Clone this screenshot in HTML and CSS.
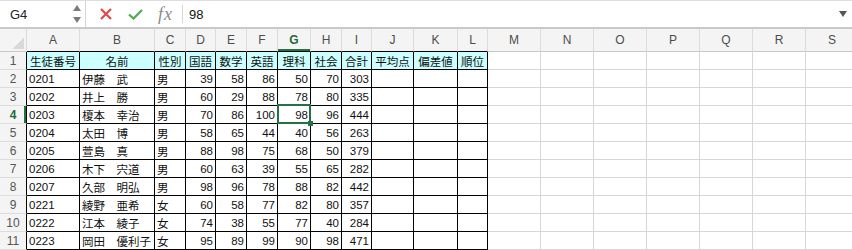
FILE: index.html
```html
<!DOCTYPE html>
<html lang="ja">
<head>
  <meta charset="UTF-8">
  <meta name="viewport" content="width=device-width, initial-scale=1.0">
  <title>成績表</title>
  <link rel="stylesheet" href="styles.css">
</head>
<body>
  <div class="formula-bar">
    <div class="name-box">
      <span>G4</span>
      <svg class="spinner" width="8" height="18" viewBox="0 0 8 18">
        <path d="M4 0 L8 6 L0 6 Z M0 12 L8 12 L4 18 Z" fill="#7a7a7a"/>
      </svg>
    </div>
    <svg class="btn-cancel" width="12" height="12" viewBox="0 0 12 12">
      <path d="M1 1 L11 11 M11 1 L1 11" stroke="#e2474b" stroke-width="2.2" fill="none"/>
    </svg>
    <svg class="btn-enter" width="15" height="11" viewBox="0 0 15 11">
      <path d="M1 5.5 L5.5 9.5 L14 1" stroke="#4fac55" stroke-width="2.3" fill="none"/>
    </svg>
    <span class="fx">fx</span>
    <span class="bar-sep"></span>
    <span class="formula">98</span>
    <svg class="expand" width="8" height="6" viewBox="0 0 8 6">
      <path d="M0 0 L8 0 L4 6 Z" fill="#555"/>
    </svg>
  </div>

  <table class="sheet">
    <colgroup>
      <col style="width:27px"><col style="width:53px"><col style="width:75px"><col style="width:31px">
      <col style="width:30px"><col style="width:31px"><col style="width:31px"><col style="width:33px">
      <col style="width:31px"><col style="width:30px"><col style="width:42px"><col style="width:44px">
      <col style="width:30px"><col style="width:53px"><col style="width:53px"><col style="width:53px">
      <col style="width:53px"><col style="width:53px"><col style="width:53px"><col style="width:53px">
    </colgroup>
    <thead>
      <tr>
        <th class="corner"></th>
        <th>A</th><th>B</th><th>C</th><th>D</th><th>E</th><th>F</th><th class="cur">G</th>
        <th>H</th><th>I</th><th>J</th><th>K</th><th>L</th><th>M</th><th>N</th><th>O</th>
        <th>P</th><th>Q</th><th>R</th><th>S</th>
      </tr>
    </thead>
    <tbody>
      <tr class="title">
        <th>1</th><td>生徒番号</td><td>名前</td><td>性別</td><td>国語</td><td>数学</td><td>英語</td>
        <td>理科</td><td>社会</td><td>合計</td><td>平均点</td><td>偏差値</td><td>順位</td>
        <td></td><td></td><td></td><td></td><td></td><td></td><td></td>
      </tr>
      <tr>
        <th>2</th><td>0201</td><td>伊藤　武</td><td>男</td><td class="n">39</td><td class="n">58</td><td class="n">86</td>
        <td class="n">50</td><td class="n">70</td><td class="n">303</td><td></td><td></td><td></td>
        <td></td><td></td><td></td><td></td><td></td><td></td><td></td>
      </tr>
      <tr>
        <th>3</th><td>0202</td><td>井上　勝</td><td>男</td><td class="n">60</td><td class="n">29</td><td class="n">88</td>
        <td class="n">78</td><td class="n">80</td><td class="n">335</td><td></td><td></td><td></td>
        <td></td><td></td><td></td><td></td><td></td><td></td><td></td>
      </tr>
      <tr>
        <th class="cur">4</th><td>0203</td><td>榎本　幸治</td><td>男</td><td class="n">70</td><td class="n">86</td><td class="n">100</td>
        <td class="n active">98</td><td class="n">96</td><td class="n">444</td><td></td><td></td><td></td>
        <td></td><td></td><td></td><td></td><td></td><td></td><td></td>
      </tr>
      <tr>
        <th>5</th><td>0204</td><td>太田　博</td><td>男</td><td class="n">58</td><td class="n">65</td><td class="n">44</td>
        <td class="n">40</td><td class="n">56</td><td class="n">263</td><td></td><td></td><td></td>
        <td></td><td></td><td></td><td></td><td></td><td></td><td></td>
      </tr>
      <tr>
        <th>6</th><td>0205</td><td>萱島　真</td><td>男</td><td class="n">88</td><td class="n">98</td><td class="n">75</td>
        <td class="n">68</td><td class="n">50</td><td class="n">379</td><td></td><td></td><td></td>
        <td></td><td></td><td></td><td></td><td></td><td></td><td></td>
      </tr>
      <tr>
        <th>7</th><td>0206</td><td>木下　宍道</td><td>男</td><td class="n">60</td><td class="n">63</td><td class="n">39</td>
        <td class="n">55</td><td class="n">65</td><td class="n">282</td><td></td><td></td><td></td>
        <td></td><td></td><td></td><td></td><td></td><td></td><td></td>
      </tr>
      <tr>
        <th>8</th><td>0207</td><td>久部　明弘</td><td>男</td><td class="n">98</td><td class="n">96</td><td class="n">78</td>
        <td class="n">88</td><td class="n">82</td><td class="n">442</td><td></td><td></td><td></td>
        <td></td><td></td><td></td><td></td><td></td><td></td><td></td>
      </tr>
      <tr>
        <th>9</th><td>0221</td><td>綾野　亜希</td><td>女</td><td class="n">60</td><td class="n">58</td><td class="n">77</td>
        <td class="n">82</td><td class="n">80</td><td class="n">357</td><td></td><td></td><td></td>
        <td></td><td></td><td></td><td></td><td></td><td></td><td></td>
      </tr>
      <tr>
        <th>10</th><td>0222</td><td>江本　綾子</td><td>女</td><td class="n">74</td><td class="n">38</td><td class="n">55</td>
        <td class="n">77</td><td class="n">40</td><td class="n">284</td><td></td><td></td><td></td>
        <td></td><td></td><td></td><td></td><td></td><td></td><td></td>
      </tr>
      <tr>
        <th>11</th><td>0223</td><td>岡田　優利子</td><td>女</td><td class="n">95</td><td class="n">89</td><td class="n">99</td>
        <td class="n">90</td><td class="n">98</td><td class="n">471</td><td></td><td></td><td></td>
        <td></td><td></td><td></td><td></td><td></td><td></td><td></td>
      </tr>
    </tbody>
  </table>
</body>
</html>
```

FILE: styles.css
```css
html, body {
  margin: 0;
  padding: 0;
  overflow: hidden;
  background-color: #fff;
}

body {
  font-family: "Liberation Sans", "Noto Sans CJK JP", sans-serif;
  width: 852px;
  height: 250px;
}

/* Formula bar */
.formula-bar {
  display: flex;
  align-items: center;
  height: 26px;
  border-top: 1px solid #dedede;
  border-bottom: 2px solid #c9c9c9;
}

.name-box {
  display: flex;
  align-items: center;
  justify-content: space-between;
  box-sizing: border-box;
  width: 86px;
  height: 100%;
  padding: 0 4px 0 10px;
  border-right: 1px solid #d4d4d4;
  font-size: 13px;
  color: #222;
}

.btn-cancel {
  margin-left: 14px;
}

.btn-enter {
  margin-left: 16px;
}

.fx {
  margin-left: 15px;
  width: 17px;
  font-family: "Liberation Serif", serif;
  font-style: italic;
  font-size: 18px;
  color: #8c8c8c;
  letter-spacing: 1px;
}

.bar-sep {
  width: 1px;
  height: 18px;
  margin-left: 7px;
  background-color: #d6d6d6;
}

.formula {
  flex: 1;
  margin-left: 6px;
  font-size: 13px;
  color: #111;
}

.expand {
  margin-right: 5px;
}

/* Sheet grid */
.sheet {
  border-collapse: separate;
  border-spacing: 0;
  table-layout: fixed;
  width: 859px;
  font-size: 11.5px;
  color: #111;
}

.sheet th,
.sheet td {
  padding: 0 2px;
  border-right: 1px solid #d6d6d6;
  border-bottom: 1px solid #d6d6d6;
  white-space: nowrap;
  overflow: hidden;
}

.sheet thead tr {
  height: 23px;
}

.sheet tbody tr {
  height: 18px;
}

.sheet thead th {
  background-color: #f4f4f4;
  border-right-color: #dcdcdc;
  border-bottom-color: #c8c8c8;
  font-weight: normal;
  font-size: 12px;
  color: #4d4d4d;
}

.sheet thead th:nth-child(n+2):nth-child(-n+13) {
  border-bottom-color: #000;
}

.sheet .corner {
  background: #f4f4f4 linear-gradient(to bottom right, transparent 50%, #d9d9d9 50%) no-repeat;
  background-size: 11px 11px;
  background-position: right 2px bottom 2px;
}

.sheet tbody th {
  background-color: #f4f4f4;
  border-right-color: #000;
  border-bottom-color: #dcdcdc;
  font-weight: normal;
  font-size: 12px;
  color: #555;
}

.sheet thead th.cur {
  font-weight: bold;
  color: #1f6b37;
  box-shadow: inset 0 -2px 0 #217346;
}

.sheet tbody th.cur {
  font-weight: bold;
  color: #1f6b37;
  box-shadow: inset -2px 0 0 #217346;
}

.sheet tbody td:nth-child(-n+13) {
  border-right-color: #000;
  border-bottom-color: #000;
}

.sheet .title td:nth-child(-n+13) {
  background-color: #ccffff;
  text-align: center;
}

.sheet td.n {
  text-align: right;
}

/* Selected cell */
.sheet td.active {
  position: relative;
  overflow: visible;
}

.sheet td.active::after {
  content: "";
  position: absolute;
  left: -1px;
  top: -2px;
  right: -1px;
  bottom: -1px;
  border: 2px solid #217346;
}

.sheet td.active::before {
  content: "";
  position: absolute;
  right: -3px;
  bottom: -3px;
  width: 5px;
  height: 5px;
  background-color: #217346;
  z-index: 1;
}
```
